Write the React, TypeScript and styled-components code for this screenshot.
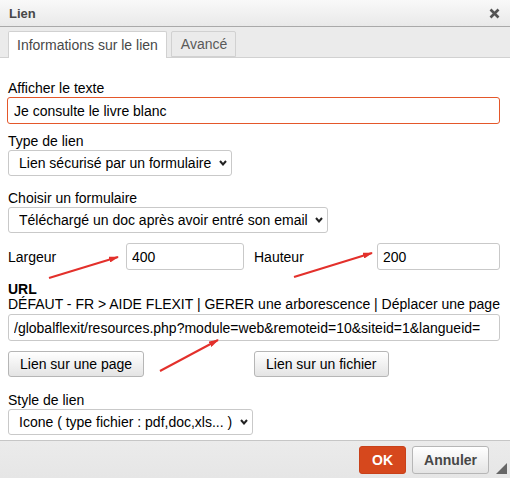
import React from "react";
import styled, { createGlobalStyle } from "styled-components";

const GlobalStyle = createGlobalStyle`
  html, body {
    margin: 0;
    padding: 0;
    background: #ffffff;
  }
  body {
    font-family: "Liberation Sans", Arial, sans-serif;
    font-size: 14px;
    color: #000;
  }
`;

const Dialog = styled.div`
  position: relative;
  width: 510px;
  height: 478px;
  display: flex;
  flex-flow: column;
  background: #ffffff;
  overflow: hidden;
`;

const TitleBar = styled.div`
  height: 26px;
  display: flex;
  align-items: center;
  justify-content: space-between;
  padding: 0 10px 0 9px;
  background: linear-gradient(#f9f9f9, #e9e9e9);
  border-bottom: 1px solid #a9a9a9;
  box-sizing: content-box;
`;

const Title = styled.span`
  font-size: 13px;
  font-weight: bold;
  color: #474747;
  padding-top: 1px;
`;

const CloseButton = styled.span`
  display: flex;
  width: 11px;
  height: 11px;
  margin-top: 1px;
`;

const TabBar = styled.div`
  height: 30px;
  display: flex;
  align-items: flex-end;
  gap: 4px;
  padding: 0 8px;
  background: #ebebeb;
  border-bottom: 1px solid #d1d1d1;
`;

const Tab = styled.div<{ $active?: boolean }>`
  height: ${(p) => (p.$active ? "26px" : "24px")};
  margin-bottom: ${(p) => (p.$active ? "-1px" : "0")};
  padding: 0 8px 0 ${(p) => (p.$active ? "8px" : "9px")};
  display: flex;
  align-items: center;
  font-size: 14px;
  color: ${(p) => (p.$active ? "#484848" : "#595959")};
  background: ${(p) => (p.$active ? "#ffffff" : "#ebebeb")};
  border: 1px solid #d1d1d1;
  border-bottom: ${(p) => (p.$active ? "none" : "1px solid #d1d1d1")};
  border-radius: 2px 2px 0 0;
`;

const Body = styled.div`
  flex: 1;
  display: flex;
  flex-flow: column;
  align-items: flex-start;
  padding: 0 10px 0 8px;
`;

const Label = styled.label<{ $mt?: number; $bold?: boolean }>`
  display: block;
  margin-top: ${(p) => p.$mt ?? 0}px;
  line-height: 16px;
  font-weight: ${(p) => (p.$bold ? "bold" : "normal")};
  color: #000;
`;

const Crumb = styled.div`
  line-height: 14px;
  white-space: nowrap;
  color: #000;
`;

const TextInput = styled.input<{ $focused?: boolean; $mt?: number; $ml?: number; $w: number }>`
  box-sizing: border-box;
  width: ${(p) => p.$w}px;
  height: 27px;
  margin: ${(p) => p.$mt ?? 1}px 0 0 ${(p) => p.$ml ?? 0}px;
  padding: 0 5px 0 ${(p) => (p.$focused ? "6px" : "5px")};
  font-family: "Liberation Sans", Arial, sans-serif;
  font-size: 14px;
  color: #000;
  background: #fff;
  border: 1px solid ${(p) => (p.$focused ? "#e4572a" : "#c9c9c9")};
  border-radius: 3px;
  outline: none;
`;

const SelectWrap = styled.div<{ $w: number }>`
  position: relative;
  width: ${(p) => p.$w}px;
  height: 26px;
  margin-top: 1px;
`;

const Select = styled.select`
  appearance: none;
  box-sizing: border-box;
  width: 100%;
  height: 100%;
  padding: 0 18px 0 10px;
  font-family: "Liberation Sans", Arial, sans-serif;
  font-size: 14px;
  color: #000;
  background: #fff;
  border: 1px solid #c9c9c9;
  border-radius: 3px;
  outline: none;
`;

const Chevron = styled.svg`
  position: absolute;
  right: 5px;
  top: 10px;
  pointer-events: none;
`;

const SizeRow = styled.div`
  display: flex;
  align-items: center;
  margin-top: 10px;
`;

const SizeLabel = styled.span<{ $w: number; $ml?: number }>`
  width: ${(p) => p.$w}px;
  margin-left: ${(p) => p.$ml ?? 0}px;
  line-height: 16px;
`;

const ButtonRow = styled.div`
  display: grid;
  grid-template-columns: 246px auto;
  justify-items: start;
  margin-top: 10px;
`;

const Button = styled.button`
  height: 26px;
  padding: 0 11px;
  font-family: "Liberation Sans", Arial, sans-serif;
  font-size: 14px;
  color: #000;
  background: linear-gradient(#ffffff, #e4e4e4);
  border: 1px solid #b6b6b6;
  border-radius: 3px;
`;

const Footer = styled.div`
  height: 37px;
  display: flex;
  align-items: center;
  justify-content: flex-end;
  gap: 6px;
  padding-right: 21px;
  background: linear-gradient(#ebebeb, #e6e6e6);
  border-top: 1px solid #c6c6c6;
  position: relative;
`;

const FooterButton = styled.button<{ $primary?: boolean }>`
  height: 28px;
  padding: 0 ${(p) => (p.$primary ? "12px" : "11px")};
  margin-top: 1px;
  font-family: "Liberation Sans", Arial, sans-serif;
  font-size: 14px;
  font-weight: bold;
  color: ${(p) => (p.$primary ? "#ffffff" : "#474747")};
  background: ${(p) => (p.$primary ? "#d6481d" : "linear-gradient(#ffffff, #e4e4e4)")};
  border: 1px solid ${(p) => (p.$primary ? "#c8411a" : "#b6b6b6")};
  border-radius: 3px;
`;

const Resizer = styled.svg`
  position: absolute;
  right: 3px;
  bottom: 4px;
`;

const ArrowLayer = styled.svg`
  position: absolute;
  left: 0;
  top: 0;
  pointer-events: none;
`;

const ChevronIcon = () => (
  <Chevron width="8" height="6" viewBox="0 0 8 6">
    <polyline points="1,1 4,4.5 7,1" fill="none" stroke="#222" strokeWidth="2" />
  </Chevron>
);

const Dropdown = ({ w, value }: { w: number; value: string }) => (
  <SelectWrap $w={w}>
    <Select defaultValue={value}>
      <option>{value}</option>
    </Select>
    <ChevronIcon />
  </SelectWrap>
);

const arrows = [
  { x1: 49, y1: 278, x2: 118, y2: 257 },
  { x1: 294, y1: 277, x2: 372, y2: 253 },
  { x1: 160, y1: 371, x2: 218, y2: 340 },
];

const App = () => {
  return (
    <>
      <GlobalStyle />
      <Dialog>
        <TitleBar>
          <Title>Lien</Title>
          <CloseButton>
            <svg width="11" height="11" viewBox="0 0 11 11">
              <path d="M1.5 1.5 L9.5 9.5 M9.5 1.5 L1.5 9.5" stroke="#555" strokeWidth="2.6" />
            </svg>
          </CloseButton>
        </TitleBar>
        <TabBar>
          <Tab $active>Informations sur le lien</Tab>
          <Tab>Avancé</Tab>
        </TabBar>
        <Body>
          <Label $mt={22}>Afficher le texte</Label>
          <TextInput $focused $w={493} $ml={-1} defaultValue="Je consulte le livre blanc" />

          <Label $mt={9}>Type de lien</Label>
          <Dropdown w={224} value="Lien sécurisé par un formulaire" />

          <Label $mt={14}>Choisir un formulaire</Label>
          <Dropdown w={320} value="Téléchargé un doc après avoir entré son email" />

          <SizeRow>
            <SizeLabel $w={118}>Largeur</SizeLabel>
            <TextInput $w={118} $mt={0} defaultValue="400" />
            <SizeLabel $w={123} $ml={10}>Hauteur</SizeLabel>
            <TextInput $w={123} $mt={0} defaultValue="200" />
          </SizeRow>

          <Label $mt={11} $bold>URL</Label>
          <Crumb>DÉFAUT - FR &gt; AIDE FLEXIT | GERER une arborescence | Déplacer une page</Crumb>
          <TextInput $mt={3} $w={492} defaultValue="/globalflexit/resources.php?module=web&remoteid=10&siteid=1&langueid=" />

          <ButtonRow>
            <Button>Lien sur une page</Button>
            <Button>Lien sur un fichier</Button>
          </ButtonRow>

          <Label $mt={15}>Style de lien</Label>
          <Dropdown w={245} value="Icone ( type fichier : pdf,doc,xls... )" />
        </Body>
        <Footer>
          <FooterButton $primary>OK</FooterButton>
          <FooterButton>Annuler</FooterButton>
          <Resizer width="11" height="11" viewBox="0 0 11 11">
            <polygon points="0,11 11,11 11,0" fill="#666" />
          </Resizer>
        </Footer>
        <ArrowLayer width="510" height="478" viewBox="0 0 510 478">
          <defs>
            <marker id="head" markerWidth="10" markerHeight="6" refX="9" refY="3" orient="auto" markerUnits="userSpaceOnUse">
              <polygon points="0,0 10,3 0,6" fill="#e3302b" />
            </marker>
          </defs>
          {arrows.map((a, i) => (
            <line key={i} x1={a.x1} y1={a.y1} x2={a.x2} y2={a.y2} stroke="#e3302b" strokeWidth="2" markerEnd="url(#head)" />
          ))}
        </ArrowLayer>
      </Dialog>
    </>
  );
};

export default App;
